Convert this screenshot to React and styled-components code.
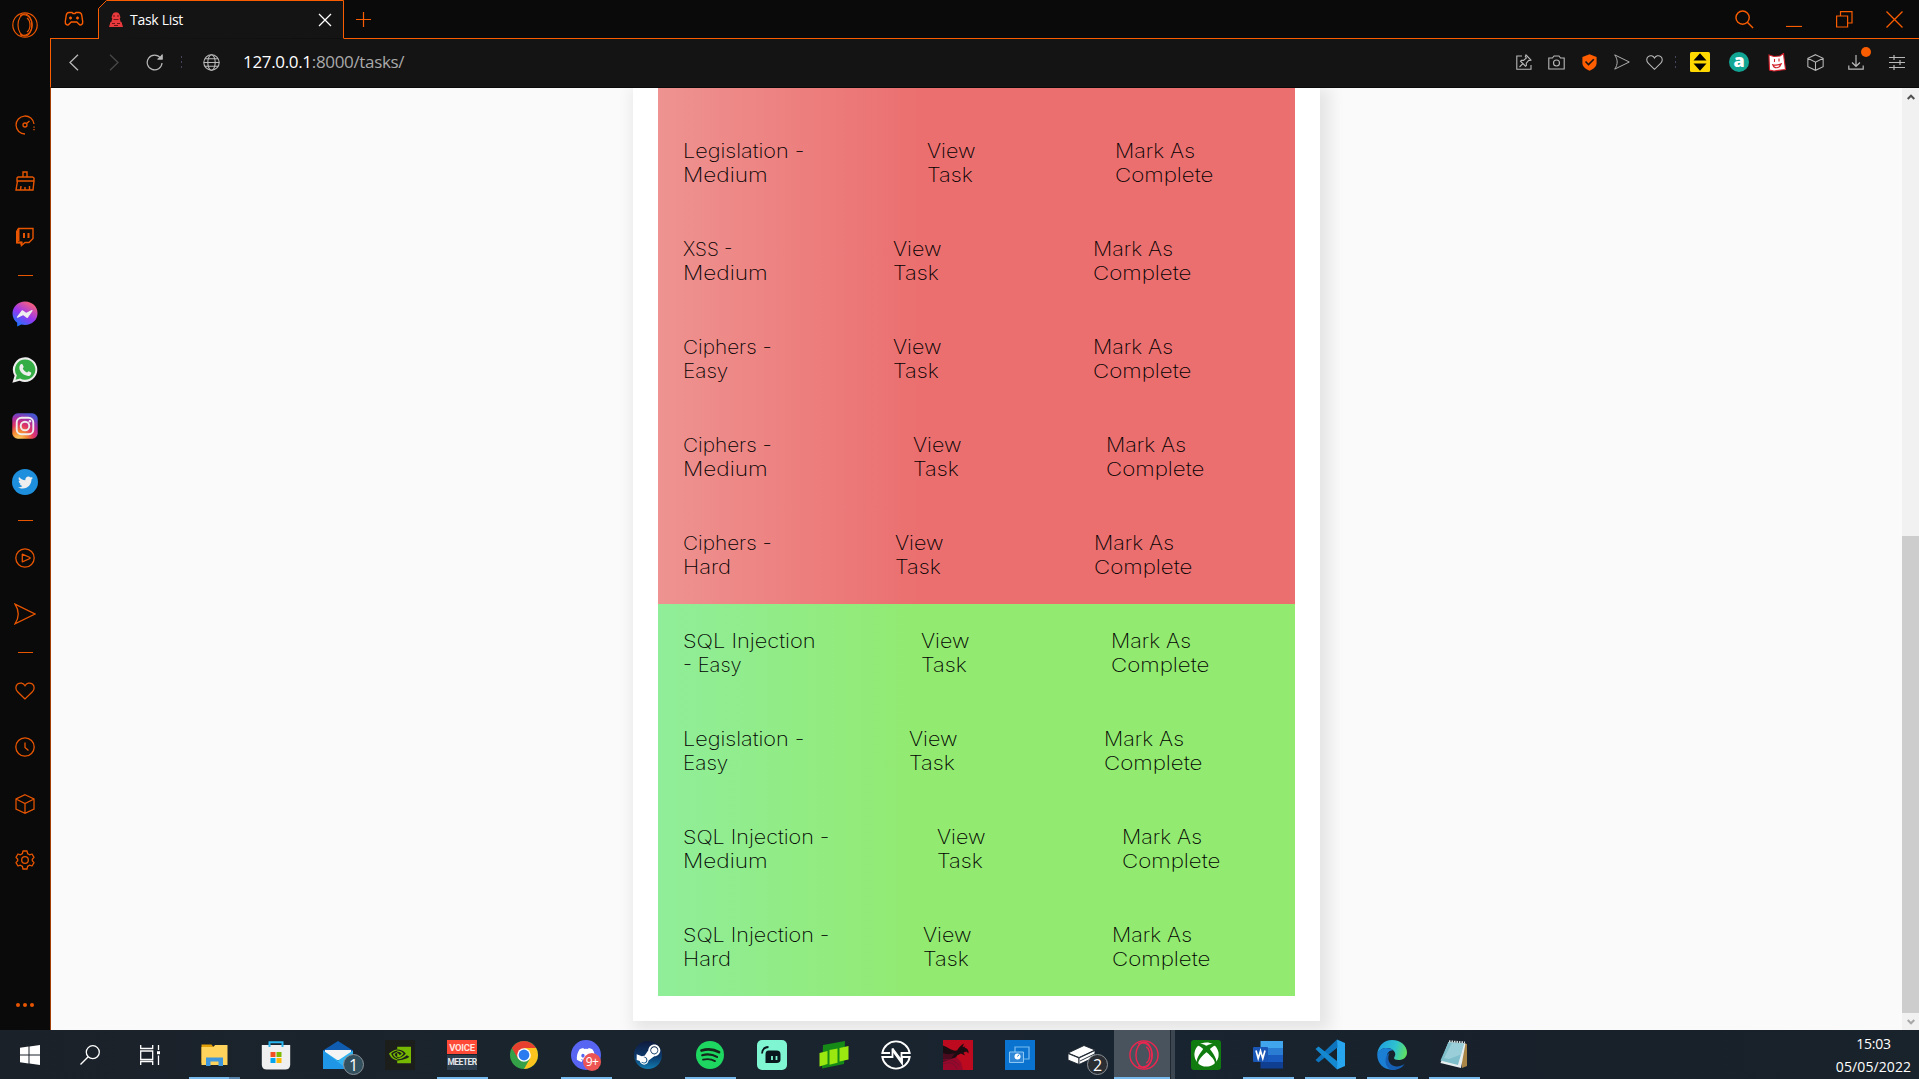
import React from "react";
import styled, { createGlobalStyle } from "styled-components";
import {
  FaTwitter,
  FaDiscord,
  FaSteamSymbol,
  FaXbox,
} from "react-icons/fa";
import { BsNvidia } from "react-icons/bs";

const ORANGE = "#fa5c00";

const GlobalStyle = createGlobalStyle`
  * { box-sizing: border-box; }
  html, body { margin: 0; padding: 0; overflow: hidden; background: #0a0a0a; }
  svg { display: block; flex: none; }
`;

const Desktop = styled.div`
  width: 1919px;
  height: 1079px;
  display: grid;
  grid-template-rows: 1030px 49px;
  overflow: hidden;
  font-family: "Open Sans", "Noto Sans", sans-serif;
`;

const Browser = styled.div`
  display: grid;
  grid-template-columns: 50px 1fr;
  background: #0a0a0a;
  min-height: 0;
`;

/* ---------- sidebar ---------- */

const Sidebar = styled.aside`
  display: flex;
  flex-direction: column;
  background: #0a0a0a;
  color: #e85500;
`;

const SideHome = styled.div`
  height: 97px;
  padding: 12px 0 0 12px;
`;

const SideCell = styled.div`
  height: ${(p) => p.$h || 56}px;
  display: flex;
  align-items: center;
  justify-content: center;
  padding-right: ${(p) => (p.$nudge ? 1 : 0)}px;
`;

const SideDivider = styled.div`
  height: ${(p) => p.$h}px;
  display: flex;
  align-items: center;
  justify-content: center;
  &::before {
    content: "";
    width: 15px;
    height: 1px;
    background: #e85500;
  }
`;

const SideMore = styled.div`
  margin-top: auto;
  height: 50px;
  display: flex;
  align-items: center;
  justify-content: center;
  gap: 3px;
`;

const Dot = styled.i`
  width: 4px;
  height: 4px;
  border-radius: 50%;
  background: #e85500;
`;

/* ---------- window chrome ---------- */

const Window = styled.div`
  display: grid;
  grid-template-rows: 39px 49px 942px;
  min-width: 0;
`;

const TitleBar = styled.div`
  display: flex;
  color: ${ORANGE};
`;

const GamePad = styled.div`
  width: 48px;
  display: flex;
  align-items: center;
  justify-content: center;
  border-bottom: 1px solid ${ORANGE};
`;

const Tab = styled.div`
  width: 246px;
  position: relative;
  display: flex;
  align-items: center;
  padding: 0 12px 0 11px;
  color: #fff;
`;

const TabOutline = styled.svg`
  position: absolute;
  left: 0;
  top: 0;
`;

const TabTitle = styled.span`
  position: relative;
  margin-left: 7px;
  flex: 1;
  font-size: 14px;
  letter-spacing: ${(p) => p.$ls}px;
  line-height: 20px;
`;

const Raised = styled.span`
  position: relative;
`;

const TitleRest = styled.div`
  flex: 1;
  display: flex;
  justify-content: space-between;
  border-bottom: 1px solid ${ORANGE};
`;

const WinCell = styled.div`
  width: ${(p) => p.$w || 50}px;
  display: flex;
  align-items: center;
  justify-content: center;
`;

const WinControls = styled.div`
  display: flex;
`;

const ToolBar = styled.div`
  display: flex;
  align-items: center;
  background: #141414;
  border-left: 1px solid ${ORANGE};
  border-bottom: 1px solid #0a0a0a;
  padding: 0 3px 2px 2px;
  color: #b8b8b8;
`;

const ToolCell = styled.div`
  width: ${(p) => p.$w}px;
  display: flex;
  align-items: center;
  justify-content: center;
  position: relative;
`;

const Dotted = styled.i`
  width: 1px;
  height: 13px;
  background: repeating-linear-gradient(#44445c 0 2px, transparent 2px 5px);
`;

const Address = styled.div`
  flex: 1;
  padding-left: 7px;
  font-size: 17px;
  line-height: 24px;
  letter-spacing: ${(p) => p.$ls}px;
  color: #a9a9a9;
  b {
    font-weight: 400;
    color: #fff;
  }
`;

const Notice = styled.i`
  position: absolute;
  right: 6px;
  top: -7px;
  width: 10px;
  height: 10px;
  border-radius: 50%;
  background: ${ORANGE};
`;

/* ---------- page ---------- */

const Viewport = styled.div`
  display: grid;
  grid-template-columns: 1fr 17px;
  border-left: 1px solid #a33f06;
  background: #fafafa;
  min-height: 0;
`;

const Page = styled.main`
  display: flex;
  justify-content: center;
  align-items: flex-start;
  overflow: hidden;
`;

const Card = styled.section`
  width: 687px;
  height: 933px;
  background: #fff;
  padding: 0 25px 25px;
  box-shadow: 5px 5px 15px 5px rgba(0, 0, 0, 0.085);
`;

const Peek = styled.div`
  height: 26px;
`;

const Group = styled.div`
  background: ${(p) =>
    p.$done
      ? "linear-gradient(90deg, #90ee9a 0%, #92ea70 41%)"
      : "linear-gradient(90deg, #ee9391 0%, #eb6f6f 41%)"};
`;

const TaskRow = styled.div`
  height: 98px;
  display: grid;
  grid-template-columns: ${(p) => p.$cols};
  padding: 25px 0 0 25px;
  font-family: Inter, "Open Sans", sans-serif;
  font-weight: 200;
  font-size: 19.4px;
  line-height: 24px;
  color: #000;
`;

const Line = styled.span`
  display: block;
  white-space: nowrap;
  transform-origin: 0 50%;
  transform: scaleX(${(p) => p.$stretch});
`;

const ScrollBar = styled.div`
  display: grid;
  grid-template-rows: 17px 431px 477px 17px;
  background: #f1f1f1;
`;

const ScrollEnd = styled.div`
  display: flex;
  align-items: center;
  justify-content: center;
  padding-left: 1px;
`;

const Thumb = styled.div`
  background: #cdcdcd;
`;

/* ---------- taskbar ---------- */

const TaskBar = styled.footer`
  display: flex;
  background: linear-gradient(90deg, #1b2129 0%, #1a242d 25%, #182430 60%, #182029 85%, #19232b 100%);
  padding-right: 7px;
`;

const SystemArea = styled.div`
  width: 183px;
  display: flex;
`;

const SystemCell = styled.div`
  width: 60px;
  display: flex;
  align-items: center;
  justify-content: center;
`;

const AppCell = styled.div`
  width: 62px;
  display: flex;
  align-items: center;
  justify-content: center;
  position: relative;
  &::after {
    content: "";
    display: ${(p) => (p.$open ? "block" : "none")};
    position: absolute;
    bottom: 0;
    left: ${(p) => (p.$active ? 1 : 6)}px;
    width: ${(p) => (p.$active ? 56 : 51)}px;
    height: 2px;
    background: ${(p) =>
      p.$stacked ? "linear-gradient(90deg, #76b9ed 40px, #5782aa 40px)" : "#76b9ed"};
  }
`;

const ActiveApp = styled.div`
  width: 61px;
  height: 49px;
  margin-left: 1px;
  background: linear-gradient(90deg, #48535e 56px, #20272e 56px 57px, #3b4650 57px);
  display: flex;
  align-items: center;
  padding-left: 15px;
`;

const Count = styled.span`
  position: absolute;
  left: ${(p) => p.$x}px;
  top: ${(p) => p.$y}px;
  width: ${(p) => p.$s || 21}px;
  height: ${(p) => p.$s || 21}px;
  border-radius: 50%;
  border: ${(p) => (p.$red ? "none" : "1px solid #8c9399")};
  background: ${(p) => (p.$red ? "#ed5555" : p.$bg || "#2a2d31")};
  color: #fff;
  font-size: ${(p) => p.$fs || 16}px;
  letter-spacing: ${(p) => (p.$red ? -0.6 : 0)}px;
  line-height: 1;
  display: flex;
  align-items: center;
  justify-content: center;
`;

const VoiceMeeter = styled.div`
  width: 30px;
  height: 30px;
  display: grid;
  grid-template-rows: 14px 15px;
  gap: 1px;
  overflow: hidden;
  font: 700 9px/15px "Roboto", sans-serif;
`;

const VoicePart = styled.span`
  display: flex;
  justify-content: center;
  background: ${(p) => p.$bg};
  color: ${(p) => p.$fg};
  letter-spacing: ${(p) => p.$ls}px;
  font-size: ${(p) => p.$fs}px;
`;

const Clock = styled.div`
  margin-left: auto;
  width: 77px;
  padding-top: 2px;
  text-align: center;
  color: #fff;
  font-size: 14px;
  line-height: 23px;
`;

const ClockLine = styled.div`
  letter-spacing: ${(p) => p.$ls}px;
  white-space: nowrap;
`;

/* ---------- icons ---------- */

const Svg = ({ w = 20, h, vb, sw = 1.2, children }) => (
  <svg
    width={w}
    height={h || w}
    viewBox={vb || `0 0 ${w} ${h || w}`}
    fill="none"
    stroke="currentColor"
    strokeWidth={sw}
  >
    {children}
  </svg>
);

const OperaIcon = ({ size, color }) => (
  <svg width={size} height={size} viewBox="0 0 26 26" fill="none" stroke={color} strokeWidth="1.2">
    <circle cx="13" cy="13" r="12.2" />
    <ellipse cx="13" cy="13" rx="7" ry="11" />
    <path d="M8 3.400C13 1 20 4 20 13s-7 12-12 9.600M15 6c2 1.400 3 4 3 7s-1 5.600-3 7" />
  </svg>
);

const Heart = ({ w = 20 }) => (
  <Svg w={w} vb="0 0 20 20" sw="1.25">
    <path d="M10 18 2.600 10.800C.3 8.500.300 5 2.600 3.100 5 1.200 8.300 1.800 10 4.800c1.700-3 5-3.600 7.400-1.700 2.300 1.900 2.300 5.400 0 7.700z" />
  </Svg>
);

const Cube = ({ w = 20 }) => (
  <Svg w={w} vb="0 0 20 20" sw="1.250">
    <path d="M10 .8 19 5v10l-9 4.200L1 15V5zM1 5l9 4.600L19 5M10 9.600v9.500" />
  </Svg>
);

const Send = ({ w = 22 }) => (
  <Svg w={w} vb="0 0 22 22" sw="1.300">
    <path d="M1 1.200 21 11 1 20.800C5.500 14 5.500 8 1 1.200z" />
  </Svg>
);

const Gauge = () => (
  <Svg w={20} sw="1.300">
    <path d="M10 19A9 9 0 1 1 19 9M19 11.500v1.200M19 14v1.200M11.500 8.500 14.500 6" />
    <circle cx="10" cy="10" r="2" />
  </Svg>
);

const Broom = () => (
  <Svg w={20} sw="1.400">
    <path d="M8 6V1h4v5M3 6h14.500l1.500 1v3H2V7zM2.500 10 1 19h17l1-9M5.500 19l.500-4M10 19v-3M14.500 19v-4" />
  </Svg>
);

const Twitch = () => (
  <Svg w={20} sw="1.400">
    <path d="M3.500 1.500H18v10l-4 4h-4l-3.500 3v-3H2V4z" />
    <path d="M2 4v11.500h4.500V18M3.500 2v12" strokeWidth="2" />
    <path d="M9 6v5M13.500 6v5" strokeWidth="2" />
  </Svg>
);

const Messenger = () => (
  <svg width="26" height="26" viewBox="0 0 26 26">
    <defs>
      <linearGradient id="msg" x1="0.15" y1="1" x2="0.75" y2="0">
        <stop offset="0" stopColor="#0a7cff" />
        <stop offset="0.5" stopColor="#9a36f0" />
        <stop offset="1" stopColor="#ff6470" />
      </linearGradient>
    </defs>
    <path d="M13 .5C6 .5.500 5.500.500 12.500c0 4 1.800 7 4.700 9.200V25.600l4-2.200c1.200.300 2.400.500 3.800.500 7 0 12.500-4.800 12.500-11.600S20 .5 13 .5z" fill="url(#msg)" />
    <path d="m5.500 16.200 4.700-6.400 4 2.800 5.800-3-4.700 6.800-4-2.900z" fill="#eee" stroke="#eee" strokeWidth="1.200" strokeLinejoin="round" />
  </svg>
);

const WhatsApp = () => (
  <svg width="26" height="26" viewBox="0 0 26 26">
    <path d="M13.300.3A12.300 12.300 0 0 0 2.600 18.800L.4 25.700l7.300-2A12.300 12.300 0 1 0 13.300.3z" fill="#eee" />
    <path d="M13.300 2.400A10.200 10.200 0 0 0 4.800 18.300l-1.300 4.400 4.700-1.200A10.200 10.200 0 1 0 13.300 2.400z" fill="#34ad45" />
    <path d="M9.200 7c.8-.3 1.300 0 1.600.8l.8 2c.2.500-.8 1.400-.8 1.700.7 1.700 2.200 3.200 4.200 4 .5.200 1.200-1.400 1.700-1.200l2.400 1.200c.4.200 0 2.300-1 2.900-1.400.8-3.300.6-5.200-.3-2.200-1-4.300-3.200-5.200-5.400C6.800 10.400 7.700 7.600 9.200 7z" fill="#eee" />
  </svg>
);

const Instagram = () => (
  <svg width="26" height="26" viewBox="0 0 26 26">
    <defs>
      <radialGradient id="ig" cx="0.25" cy="1.05" r="1.1">
        <stop offset="0" stopColor="#fddb6d" />
        <stop offset="0.3" stopColor="#f58a34" />
        <stop offset="0.55" stopColor="#e03566" />
        <stop offset="0.8" stopColor="#a62fa8" />
        <stop offset="1" stopColor="#4a55d0" />
      </radialGradient>
    </defs>
    <rect x=".3" y=".3" width="25.400" height="25.400" rx="5.500" fill="url(#ig)" />
    <g fill="none" stroke="#eee" strokeWidth="1.900">
      <rect x="4.700" y="4.700" width="16.600" height="16.600" rx="4.800" />
      <circle cx="13" cy="13" r="4.300" />
    </g>
    <circle cx="17.900" cy="8.200" r="1.200" fill="#eee" />
  </svg>
);

const TwitterBadge = styled.div`
  width: 26px;
  height: 26px;
  border-radius: 50%;
  background: #1d8fdd;
  color: #eee;
  display: flex;
  align-items: center;
  justify-content: center;
`;

const PlayCircle = () => (
  <Svg w={20} sw="1.300">
    <circle cx="10" cy="10" r="9.200" />
    <path d="M7.300 6.200v7.600L15 10.500v-1z" strokeLinejoin="round" />
  </Svg>
);

const History = () => (
  <Svg w={20} sw="1.300">
    <circle cx="10" cy="10" r="9.200" />
    <path d="M10 5.500v5l3.500 3" />
  </Svg>
);

const Gear = () => (
  <Svg w={20} sw="1.300">
    <circle cx="10" cy="10" r="3.300" />
    <path strokeLinejoin="round" d="M8 1h4l.6 2.600 2 1.200 2.400-.8 2 3.400-1.700 1.800v1.600l1.700 1.800-2 3.400-2.400-.8-2 1.200L12 19H8l-.6-2.600-2-1.200L3 16l-2-3.400 1.700-1.800V9.200L1 7.400 3 4l2.400.8 2-1.200z" />
  </Svg>
);

const Pad = () => (
  <Svg w={20} h={16} sw="1.400">
    <path d="M5 1.500h3l1 1h2l1-1h3c2 0 2.500 1 2.800 3l.9 6c.4 3-2.200 4.500-3.900 2.500L12.800 11H7.200l-2 2C3.500 15 .9 13.500 1.300 10.500l.9-6c.3-2 .8-3 2.800-3z" />
    <path d="M5 7h3M6.500 5.500v3M12 7h3M13.500 5.500v3" />
  </Svg>
);

const Favicon = () => (
  <Raised>
    <svg width="14" height="15" viewBox="0 0 14 15">
      <path d="M3.500 2.500c1-3 6-3 7 0l1 3-.8 1 1 3.500h.8L14 15H0l1.500-5h.8l1-3.500-.8-1z" fill="#e8393c" />
      <path d="M4 4h2M8 4h2M4.500 7.500h5M3 11.500h3M8 11.500h3M5 13.500h4" stroke="#6d1315" strokeWidth="1" />
    </svg>
  </Raised>
);

const Globe = () => (
  <Svg w={17} sw="1.100">
    <circle cx="8.500" cy="8.500" r="7.700" />
    <ellipse cx="8.500" cy="8.500" rx="3.700" ry="7.700" />
    <path d="M.8 8.500h15.400M2 4.800h13M2 12.200h13" />
  </Svg>
);

const Reload = () => (
  <Svg w={17} sw="1.200">
    <path d="M14.500 4A7.400 7.400 0 1 0 16 9M16 .8V5h-4.300" />
    <path d="M16 1.500V5h-3.500z" fill="currentColor" />
  </Svg>
);

const PinIcon = () => (
  <Svg w={16} sw="1.100">
    <path d="M6 2H.8v13.200H15V11" />
    <path d="m10 1 5 5-1 .5-1.300-.2-2.400 2.900.1 2.200-.9.800-5-5 .9-.9 2.200.1 2.800-2.500L9.300 2.500zM7 9.500 3.500 13" />
  </Svg>
);

const Camera = () => (
  <Svg w={17} h={15} sw="1.100">
    <path d="M.8 3h3.700l1.500-2h5l1.500 2h3.700v11H.8z" />
    <circle cx="8.500" cy="8" r="3" />
  </Svg>
);

const Shield = () => (
  <svg width="15" height="17" viewBox="0 0 15 17">
    <path d="M7.500.300 14.600 3v6c0 3.500-3 6-7.100 7.800C3.400 15 .4 12.500.4 9V3z" fill="#ff5e00" />
    <path d="m3.500 7.500 3 3 5.300-5.300" fill="none" stroke="#141414" strokeWidth="1.600" />
  </svg>
);

const Sort = () => (
  <svg width="20" height="20" viewBox="0 0 20 20">
    <rect width="20" height="20" rx="1.500" fill="#ffd800" />
    <path d="m10 1.200 6.500 7.300h-13zM10 18.800l6.500-7.300h-13z" fill="#000" />
  </svg>
);

const LetterBadge = styled.span`
  width: 20px;
  height: 20px;
  border-radius: 50%;
  background: #12a594;
  color: #fff;
  font: 800 18px/16px "Open Sans", sans-serif;
  text-align: center;
`;

const Cat = () => (
  <svg width="19" height="19" viewBox="0 0 19 19">
    <path d="m1 2 5 1.500 6-.5L15.500.500 16 5l1.500 11.500-4.500.500-7 1L1.500 17 1.200 9z" fill="#fff" stroke="#d3202a" strokeWidth="1.100" />
    <path d="M6.500 6v3M11 5.500v3M4 11.500c3 1 7 .5 10-1M5 12c1 4 7 3.500 8-.8" stroke="#d3202a" fill="none" strokeWidth="1.100" />
  </svg>
);

const Download = () => (
  <Svg w={16} sw="1.200">
    <path d="M8 1v11M4 8.500 8 12.300l4-3.800M.8 11.500v3.700h14.400v-3.700" />
  </Svg>
);

const Sliders = () => (
  <Svg w={16} h={15} sw="1.200">
    <path d="M0 2.500h16M0 7.500h16M0 12.500h16M5 0v5M11 5v5M5 10v5" />
  </Svg>
);

const SearchIcon = ({ w = 19, flip }) => (
  <svg width={w} height={w} viewBox="0 0 20 20" fill="none" stroke={flip ? "#fff" : ORANGE} strokeWidth={flip ? 1.3 : 1.5}>
    {flip ? (
      <>
        <circle cx="12.800" cy="7.200" r="6.500" />
        <path d="M8.200 11.800.5 19.500" />
      </>
    ) : (
      <>
        <circle cx="8" cy="8" r="7" />
        <path d="m13 13 6 6" />
      </>
    )}
  </svg>
);

const WindowsLogo = () => (
  <svg width="20" height="20" viewBox="0 0 20 20" fill="#fff">
    <path d="M0 2.800 8.500 1.600V9.500H0zM9.500 1.400 20 0v9.500H9.500zM0 10.500h8.500v7.900L0 17.200zM9.500 10.500H20V20L9.500 18.600z" />
  </svg>
);

const TaskView = () => (
  <Svg w={20} sw="1.300">
    <g stroke="#fff">
      <path d="M.7 0v3.500h12V0M.7 20v-3.500h12V20M.7 6h12v8.500H.7zM18.500 0v5M18.500 10.500V20" />
      <path d="M17 7.700h3" strokeWidth="3" />
    </g>
  </Svg>
);

const Explorer = () => (
  <svg width="27" height="24" viewBox="0 0 27 24">
    <path d="M.5 1.500h10l1.500 2H26V20H.500z" fill="#e3a008" />
    <path d="M.5 4h12l1.500-2h12.500v20H.500z" fill="#ffd35c" />
    <path d="M5 23V14.500h17V23h-4.500v-4.500h-8V23z" fill="#3e97dd" />
  </svg>
);

const Store = () => (
  <svg width="30" height="30" viewBox="0 0 30 30">
    <path d="M.8 5h28.400v20a5 5 0 0 1-5 4.500H5.800a5 5 0 0 1-5-4.500z" fill="#f0f0f0" />
    <path d="M8.500 7V2.200h13V7" fill="none" stroke="#28b5f0" strokeWidth="2" />
    <path fill="#f25022" d="M9.500 12h5v5h-5z" />
    <path fill="#7fba00" d="M15.500 12h5v5h-5z" />
    <path fill="#00a4ef" d="M9.500 18h5v5h-5z" />
    <path fill="#ffb900" d="M15.500 18h5v5h-5z" />
  </svg>
);

const Mail = () => (
  <svg width="30" height="28" viewBox="0 0 30 28">
    <path d="M0 9.500 15 0l15 9.500V12H0z" fill="#0f5cb0" />
    <path d="M2 9h26v10H2z" fill="#f4f4f4" />
    <path d="m0 9.500 15 10 15-10V28H0z" fill="#32b4f2" />
    <path d="M0 9.500 24 28H0z" fill="#1f96e6" />
  </svg>
);

const NvidiaTile = styled.div`
  width: 30px;
  height: 30px;
  background: #1c1e1c;
  color: #76b900;
  display: flex;
  align-items: center;
  justify-content: center;
`;

const Chrome = () => (
  <svg width="28" height="28" viewBox="0 0 28 28">
    <circle cx="14" cy="14" r="14" fill="#34a048" />
    <path d="M1.900 7A14 14 0 0 1 26.100 7H14L8 17.500z" fill="#e8402f" />
    <path d="M26.100 7A14 14 0 0 1 14 28L20 17.500 14 7z" fill="#fcc31e" />
    <circle cx="14" cy="14" r="6.800" fill="#fff" />
    <circle cx="14" cy="14" r="5.400" fill="#2a7bef" />
  </svg>
);

const RoundTile = styled.div`
  width: ${(p) => p.$s}px;
  height: ${(p) => p.$s}px;
  border-radius: ${(p) => p.$r || "50%"};
  background: ${(p) => p.$bg};
  color: #fff;
  display: flex;
  align-items: center;
  justify-content: center;
  overflow: hidden;
`;

const SpotifyIcon = () => (
  <svg width="28" height="28" viewBox="0 0 28 28" fill="none" stroke="#15251b" strokeLinecap="round">
    <circle cx="14" cy="14" r="14" fill="#1ed760" stroke="none" />
    <path d="M5.500 9.500c6-1.700 12.500-1.200 17.500 1.700" strokeWidth="2.700" />
    <path d="M6.200 14.300c5.300-1.500 10.500-.8 14.800 1.600" strokeWidth="2.200" />
    <path d="M7 18.700c4.300-1.100 8.500-.6 12 1.400" strokeWidth="1.800" />
  </svg>
);

const Streamlabs = () => (
  <svg width="30" height="30" viewBox="0 0 30 30">
    <rect width="30" height="30" rx="5" fill="#80f5d2" />
    <path d="M5 13.500C5.200 9.500 7.500 7.200 11.500 7" fill="none" stroke="#09161d" strokeWidth="1.800" />
    <path d="M12 10.500h7.500c3 0 4 1.200 4 4v4.800c0 2.500-1 3.700-4 3.700H8.500v-8.200c0-3 .9-4.300 3.500-4.300z" fill="#09161d" />
    <path d="M15 16v4M19.500 16v4" stroke="#80f5d2" strokeWidth="1.800" />
  </svg>
);

const GreenCards = () => (
  <svg width="30" height="28" viewBox="0 0 30 28">
    <path d="m4 4 22-4-1 23-22 4.500z" fill="#158a17" />
    <path d="M.5 12 8.500 10v13L.5 25.500zM10.500 9l8-1.500v14.300l-8 2zM20.500 7l9-2v13.500l-9 2z" fill="#9ae80f" />
  </svg>
);

const NLogo = () => (
  <svg width="30" height="30" viewBox="0 0 30 30" fill="none" stroke="#fff" strokeWidth="1.800">
    <path d="M9 13H1.300A13.900 13.900 0 0 1 28.700 13H20.500v7.500L11.500 8.500" />
    <path d="M21 17h7.700A13.900 13.900 0 0 1 1.300 17H11.500V8.500" />
    <path d="M21 17v6.500L12 11" />
  </svg>
);

const RedTile = () => (
  <svg width="30" height="30" viewBox="0 0 30 30">
    <rect width="30" height="30" fill="#bd0a1e" />
    <path d="M0 16h12l6 6 2 8H0z" fill="#99072b" />
    <path d="M0 5.500c6 2 9 6 14 5 2-3 4-5.500 7-7l-1.500 3.500 3-.5-1 1.500c2.500 0 4.500 2 4 5.500l-2-2-3 1 1.500 3-4-2-4 2c-1 4-7 2-14 6z" fill="#1b0c12" />
    <path d="M0 13c5 2 9 1 12 0l-4 6-8 3z" fill="#4b0b1f" />
    <path d="M0 24c8-3 12 0 14 5M0 20c8-1 13 1 16 6" fill="none" stroke="#77102f" />
  </svg>
);

const BlueTile = () => (
  <svg width="30" height="30" viewBox="0 0 30 30" fill="none">
    <rect width="30" height="30" fill="#0973cf" />
    <path d="M10 7h14v12H10z" stroke="#7dbdf0" strokeWidth="1.200" />
    <path d="M4.500 12h14v10.500h-14z" stroke="#8cc6f3" strokeWidth="1" fill="#2d86d6" />
    <circle cx="12.500" cy="16.500" r="3" fill="#fff" />
    <path d="M12.500 16.500 14 14.500" stroke="#0973cf" />
  </svg>
);

const BoxIcon = () => (
  <svg width="28" height="20" viewBox="0 0 28 20" fill="#fff" stroke="#18222c" strokeWidth=".9">
    <path d="M0 8 16 .500 27 5 11 12.500z" />
    <path d="M0 8.500 11 13v6.500L0 15z" />
    <path d="m11 13 16-7.500V12l-16 7.500z" />
    <path d="m12 16 15-7.300" />
  </svg>
);

const WordIcon = () => (
  <svg width="30" height="28" viewBox="0 0 30 28">
    <path d="M7.500 0H30v7H7.500z" fill="#41a5ee" />
    <path d="M7.500 7H30v7H7.500z" fill="#2b7cd3" />
    <path d="M7.500 14H30v7H7.500z" fill="#185abd" />
    <path d="M7.500 21H30v6.500H7.500z" fill="#103f91" />
    <rect y="6" width="15" height="15" rx="1" fill="#1a56b5" />
    <path d="m3 9.500 2.200 8 2.300-7.500 2.300 7.500 2.200-8" fill="none" stroke="#fff" strokeWidth="1.700" />
  </svg>
);

const CodeIcon = () => (
  <svg width="30" height="31" viewBox="0 0 30 31">
    <path d="M22 .5 30 4v23l-8 3.500z" fill="#27a5ee" />
    <path d="M22.500 8.500 3.500 23.500.5 21 22 .5z" fill="#0d74bd" />
    <path d="M22.500 22.500 3.500 7.500.5 10 22 30.500z" fill="#1589d0" />
  </svg>
);

const EdgeIcon = () => (
  <svg width="30" height="30" viewBox="0 0 30 30">
    <defs>
      <linearGradient id="edgeTop" x1="0" y1="0.3" x2="1" y2="0.5">
        <stop offset="0" stopColor="#1f9fe0" />
        <stop offset="0.6" stopColor="#2fc2cf" />
        <stop offset="1" stopColor="#5fdf62" />
      </linearGradient>
    </defs>
    <path d="M.3 14C1 6 7 0 15 0c9 0 15 6 15 12.500C30 17.500 26 20 21.500 20c-3 0-4.500-1-4.500-2s1.700-2 1.200-4.500C17.500 10 13.500 8 9.500 8 5 8 1.500 11 .3 14z" fill="url(#edgeTop)" />
    <path d="M.2 14C1.500 10.500 5 8 9.500 8c2.500 0 5 .8 6.700 2.300C12 10 9.500 13.500 10 18c.6 6 6 9 9.500 10.800C10 32 0 26 .2 14z" fill="#1b7fd4" />
    <path d="M12.500 13c-3 6-.5 13 7 13.500 3 .1 5.500-.8 8-2.500-2 3.500-6.500 6-11.500 6C11 29.500 8.500 25 8.500 21s1.500-7 4-8z" fill="#1560b4" />
  </svg>
);

const Notes = () => (
  <svg width="28" height="29" viewBox="0 0 28 29">
    <path d="m22 3 5 1v22l-5 2z" fill="#a88445" />
    <path d="M8.500 2 25.500 3.500 21 28 .5 23z" fill="#e6eef0" />
    <path d="M8.500 2 24 3.400 18 25 .5 20.500z" fill="#7fbfcb" />
    <path d="m12 3 12 .5-3 11L9 19 4 18z" fill="#a5d6de" opacity=".7" />
    <path d="M9 1.300 25 2.500" stroke="#d5dfe0" strokeWidth="2" strokeDasharray="1.500 1" />
  </svg>
);

/* ---------- data ---------- */

const openTasks = [
  { name: ["Legislation -", "Medium"], view: 927, mark: 1115 },
  { name: ["XSS -", "Medium"], view: 893, mark: 1093 },
  { name: ["Ciphers -", "Easy"], view: 893, mark: 1093 },
  { name: ["Ciphers -", "Medium"], view: 913, mark: 1106 },
  { name: ["Ciphers -", "Hard"], view: 895, mark: 1094 },
];

const doneTasks = [
  { name: ["SQL Injection", "- Easy"], view: 921, mark: 1111 },
  { name: ["Legislation -", "Easy"], view: 909, mark: 1104 },
  { name: ["SQL Injection -", "Medium"], view: 937, mark: 1122 },
  { name: ["SQL Injection -", "Hard"], view: 923, mark: 1112 },
];

const stretch = {
  "Legislation -": 1.115,
  "SQL Injection -": 1.11,
  "SQL Injection": 1.125,
  "Ciphers -": 1.07,
  "XSS -": 0.98,
  "- Easy": 1.04,
  Easy: 1.07,
  Medium: 1.165,
  Hard: 1.13,
  View: 1.11,
  Task: 1.12,
  "Mark As": 1.105,
  Complete: 1.15,
};

const Label = ({ lines }) => (
  <div>
    {lines.map((t) => (
      <Line key={t} $stretch={stretch[t]}>{t}</Line>
    ))}
  </div>
);

const Task = ({ name, view, mark }) => (
  <TaskRow $cols={`${view - 683}px ${mark - view}px 1fr`}>
    <Label lines={name} />
    <Label lines={["View", "Task"]} />
    <Label lines={["Mark As", "Complete"]} />
  </TaskRow>
);

export default function App() {
  return (
    <Desktop>
      <GlobalStyle />
      <Browser>
        <Sidebar>
          <SideHome><OperaIcon size={26} color="#e85500" /></SideHome>
          <SideCell $nudge><Gauge /></SideCell>
          <SideCell><Broom /></SideCell>
          <SideCell><Twitch /></SideCell>
          <SideDivider $h={21} />
          <SideCell><Messenger /></SideCell>
          <SideCell><WhatsApp /></SideCell>
          <SideCell><Instagram /></SideCell>
          <SideCell><TwitterBadge><FaTwitter size={15} /></TwitterBadge></SideCell>
          <SideDivider $h={20} />
          <SideCell $nudge><PlayCircle /></SideCell>
          <SideCell><Send w={22} /></SideCell>
          <SideDivider $h={21} />
          <SideCell $nudge><Heart w={20} /></SideCell>
          <SideCell $nudge><History /></SideCell>
          <SideCell $nudge $h={57}><Cube /></SideCell>
          <SideCell $nudge><Gear /></SideCell>
          <SideMore><Dot /><Dot /><Dot /></SideMore>
        </Sidebar>
        <Window>
          <TitleBar>
            <GamePad><Pad /></GamePad>
            <Tab>
              <TabOutline width="246" height="39" viewBox="0 0 246 39">
                <path d="M.5 39V8.500L8.500.500H245.500V38.500" fill="#141414" stroke={ORANGE} />
              </TabOutline>
              <Favicon />
              <TabTitle $ls={-0.3}>Task List</TabTitle>
              <Raised>
                <Svg w={14} sw="1.300"><path d="m1 1 12 12M13 1 1 13" /></Svg>
              </Raised>
            </Tab>
            <TitleRest>
              <WinCell $w={38}>
                <Svg w={15} sw="1.200"><path d="M7.500 0v15M0 7.500h15" /></Svg>
              </WinCell>
              <WinControls>
                <WinCell><SearchIcon w={19} /></WinCell>
                <WinCell><Svg w={16} sw="1.200"><path d="M0 15.500h16" /></Svg></WinCell>
                <WinCell>
                  <Svg w={17} sw="1.200"><path d="M.6 5h11v11H.6zM4.500 5V.6H16V12h-4.500" /></Svg>
                </WinCell>
                <WinCell><Svg w={17} sw="1.300"><path d="m.5.500 16 16M16.500.500l-16 16" /></Svg></WinCell>
              </WinControls>
            </TitleRest>
          </TitleBar>
          <ToolBar>
            <ToolCell $w={41}><Svg w={10} h={17} sw="1.300"><path d="m9 .8-8 7.700 8 7.700" /></Svg></ToolCell>
            <ToolCell $w={39}>
              <svg width="10" height="17" viewBox="0 0 10 17" fill="none" stroke="#484848" strokeWidth="1.300"><path d="m1 .8 8 7.700-8 7.700" /></svg>
            </ToolCell>
            <ToolCell $w={42}><Reload /></ToolCell>
            <ToolCell $w={12}><Dotted /></ToolCell>
            <ToolCell $w={49}><Globe /></ToolCell>
            <Address $ls={-0.33}><b>127.0.0.1</b>:8000/tasks/</Address>
            <ToolCell $w={32.5}><PinIcon /></ToolCell>
            <ToolCell $w={32.5}><Camera /></ToolCell>
            <ToolCell $w={32.5}><Shield /></ToolCell>
            <ToolCell $w={32.5}><Send w={16} /></ToolCell>
            <ToolCell $w={32.5}><Heart w={17} /></ToolCell>
            <ToolCell $w={10}><Dotted /></ToolCell>
            <ToolCell $w={39}><Sort /></ToolCell>
            <ToolCell $w={39}><LetterBadge>a</LetterBadge></ToolCell>
            <ToolCell $w={38.5}><Cat /></ToolCell>
            <ToolCell $w={37}><Cube w={17} /></ToolCell>
            <ToolCell $w={43}><Download /><Notice /></ToolCell>
            <ToolCell $w={39}><Sliders /></ToolCell>
          </ToolBar>
          <Viewport>
            <Page>
              <Card>
                <Group>
                  <Peek />
                  {openTasks.map((t) => <Task key={t.name.join()} {...t} />)}
                </Group>
                <Group $done>
                  {doneTasks.map((t) => <Task key={t.name.join()} {...t} />)}
                </Group>
              </Card>
            </Page>
            <ScrollBar>
              <ScrollEnd>
                <svg width="8" height="6" viewBox="0 0 8 6" fill="none" stroke="#505050" strokeWidth="2"><path d="m.7 5 3.300-3.300L7.300 5" /></svg>
              </ScrollEnd>
              <div />
              <Thumb />
              <ScrollEnd>
                <svg width="8" height="6" viewBox="0 0 8 6" fill="none" stroke="#a8a8a8" strokeWidth="2"><path d="m.7 1 3.300 3.300L7.300 1" /></svg>
              </ScrollEnd>
            </ScrollBar>
          </Viewport>
        </Window>
      </Browser>
      <TaskBar>
        <SystemArea>
          <SystemCell><WindowsLogo /></SystemCell>
          <SystemCell><SearchIcon w={20} flip /></SystemCell>
          <SystemCell><TaskView /></SystemCell>
        </SystemArea>
        <AppCell $open $stacked><Explorer /></AppCell>
        <AppCell><Store /></AppCell>
        <AppCell><Mail /><Count $x={36} $y={24} $bg="#33505f">1</Count></AppCell>
        <AppCell><NvidiaTile><BsNvidia size={22} /></NvidiaTile></AppCell>
        <AppCell $open>
          <VoiceMeeter>
            <VoicePart $bg="#ff4a38" $fg="#ffe4df" $fs={9.5} $ls={-0.3}>VOICE</VoicePart>
            <VoicePart $bg="#2c3e4d" $fg="#e3e7ea" $fs={8.5} $ls={-0.6}>MEETER</VoicePart>
          </VoiceMeeter>
        </AppCell>
        <AppCell><Chrome /></AppCell>
        <AppCell $open>
          <RoundTile $s={30} $bg="#5865f2"><FaDiscord size={20} /></RoundTile>
          <Count $red $x={28} $y={23} $s={18} $fs={12}>9+</Count>
        </AppCell>
        <AppCell>
          <RoundTile $s={28} $bg="linear-gradient(#101a3c, #0c3a6c 55%, #117bb0)"><FaSteamSymbol size={27} /></RoundTile>
        </AppCell>
        <AppCell $open><SpotifyIcon /></AppCell>
        <AppCell><Streamlabs /></AppCell>
        <AppCell><GreenCards /></AppCell>
        <AppCell><NLogo /></AppCell>
        <AppCell><RedTile /></AppCell>
        <AppCell><BlueTile /></AppCell>
        <AppCell><BoxIcon /><Count $x={36} $y={24}>2</Count></AppCell>
        <AppCell $open $active><ActiveApp><OperaIcon size={30} color="#f0254f" /></ActiveApp></AppCell>
        <AppCell><RoundTile $s={30} $r="3px" $bg="#107c10"><FaXbox size={25} /></RoundTile></AppCell>
        <AppCell $open><WordIcon /></AppCell>
        <AppCell $open><CodeIcon /></AppCell>
        <AppCell $open><EdgeIcon /></AppCell>
        <AppCell $open><Notes /></AppCell>
        <Clock>
          <ClockLine $ls={-0.2}>15:03</ClockLine>
          <ClockLine $ls={0.1}>05/05/2022</ClockLine>
        </Clock>
      </TaskBar>
    </Desktop>
  );
}
